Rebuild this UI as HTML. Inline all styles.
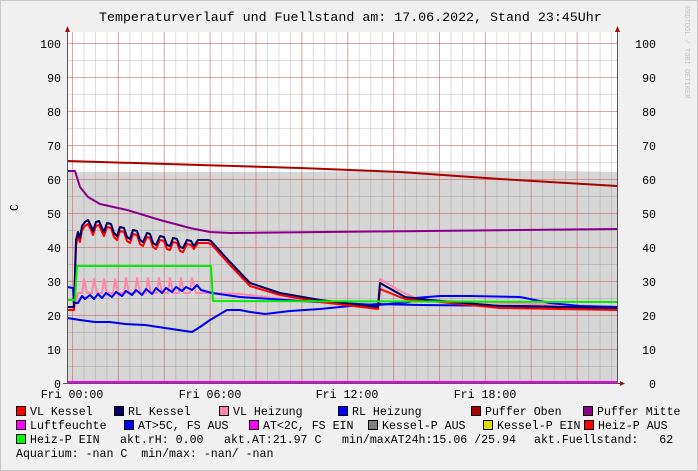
<!DOCTYPE html>
<html><head><meta charset="utf-8"><style>
html,body{margin:0;padding:0;background:#f0f0f0}
svg{display:block}
text{font-family:"Liberation Mono","DejaVu Sans Mono",monospace;fill:#000;white-space:pre}
</style></head><body>
<svg width="698" height="471" viewBox="0 0 698 471" xmlns="http://www.w3.org/2000/svg">
<defs>
<pattern id="minV" x="72" y="0" width="11.47" height="471" patternUnits="userSpaceOnUse"><line x1="0.5" y1="0" x2="0.5" y2="471" stroke="rgba(120,120,120,0.25)" stroke-width="1"/></pattern>
<pattern id="majV" x="72" y="0" width="45.87" height="471" patternUnits="userSpaceOnUse"><line x1="0.5" y1="0" x2="0.5" y2="471" stroke="rgba(230,80,80,0.4)" stroke-width="1"/></pattern>
<pattern id="minH" x="0" y="383" width="698" height="17" patternUnits="userSpaceOnUse"><line x1="0" y1="0.5" x2="698" y2="0.5" stroke="rgba(120,120,120,0.25)" stroke-width="1"/></pattern>
<pattern id="majH" x="0" y="383" width="698" height="34" patternUnits="userSpaceOnUse"><line x1="0" y1="0.5" x2="698" y2="0.5" stroke="rgba(230,80,80,0.4)" stroke-width="1"/></pattern>
</defs>
<rect x="0.5" y="0.5" width="697" height="470" fill="#f0f0f0" stroke="#c8c8c8"/>
<text x="99" y="21" font-size="13.3">Temperaturverlauf und Fuellstand am: 17.06.2022, Stand 23:45Uhr</text>
<text transform="translate(685,6) rotate(90)" font-size="7" style="fill:#c4c4c4">RRDTOOL / TOBI OETIKER</text>
<text transform="translate(18,211) rotate(-90)" font-size="11.6">C</text>
<rect x="67" y="32" width="550" height="351" fill="#ffffff"/>
<path d="M67,172 L300,172 L360,171 L560,171 L617,172 L617,383 L67,383 Z" fill="#d6d6d6"/>
<rect x="67" y="32" width="550" height="351" fill="url(#minV)"/>
<rect x="67" y="32" width="550" height="351" fill="url(#minH)"/>
<rect x="67" y="32" width="550" height="351" fill="url(#majV)"/>
<rect x="67" y="32" width="550" height="351" fill="url(#majH)"/>
<g fill="none" stroke-width="2" stroke-linejoin="round">
<polyline stroke="#aa0000" points="67,161 200,165 300,168 400,172 500,179 617,186"/>
<polyline stroke="#880088" points="67,171 75,171 80,187 88,197 100,204 127,210 160,220 190,228 210,232 230,233 617,229"/>
<polyline stroke="#0000ee" points="67,318 80,320 95,322 110,322 125,324 145,325 165,328 192,332 200,327 210,320 227,310 240,310 250,312 265,314 290,311 320,309 350,306 378,304 420,305 617,307"/>
<polyline stroke="#ff88aa" points="67,307 75,307 78,293 82,293 84,279 87,293 92,293 94,279 97,293 102,293 104,279 107,293 113,293 115,279 118,293 124,293 126,278 129,293 135,293 137,278 140,293 146,293 148,278 151,293 157,293 159,278 162,293 168,293 170,278 173,293 179,293 181,278 184,293 190,293 192,278 196,293 212,293 240,294 300,301 378,306 380,279 400,291 420,300 617,307"/>
<polyline stroke="#0000ff" points="67,287 73,288 74,303 78,303 82,296 85,299 90,295 94,299 98,294 102,298 106,293 112,297 116,292 122,296 126,291 132,295 136,290 142,295 146,289 152,294 156,288 162,293 166,288 172,292 176,287 182,291 186,287 192,290 197,285 201,290 212,293 240,297 300,301 340,303 378,305 410,302 415,298 440,296 470,296 520,297 550,303 580,306 617,307"/>
<polyline stroke="#ff0000" points="67,310 74,310 76,245 78,237 80,242 82,230 85,226 88,224 91,230 93,235 96,226 99,225 102,232 104,236 107,227 111,228 114,237 117,240 120,231 124,232 127,241 130,243 133,234 137,235 140,244 143,246 147,237 150,238 153,247 156,249 160,240 164,241 167,249 170,250 173,242 177,243 180,251 183,252 187,244 191,245 194,249 198,243 208,243 211,244 230,265 250,286 280,295 320,302 378,309 380,289 405,299 430,301 500,308 617,310"/>
<polyline stroke="#000066" points="67,307 74,307 76,240 78,232 80,238 82,226 85,222 88,220 91,226 93,231 96,222 99,221 102,228 104,232 107,223 111,224 114,233 117,236 120,227 124,228 127,237 130,239 133,230 137,231 140,240 143,242 147,233 150,234 153,243 156,245 160,236 164,237 167,245 170,246 173,238 177,239 180,247 183,248 187,240 191,241 194,246 198,240 208,240 211,241 230,262 250,283 280,293 320,300 378,307 380,283 405,297 430,300 500,306 617,308"/>
<polyline stroke="#00ee00" points="67,300 75,300 77,266 211,266 213,301 617,302"/>
<line x1="67" y1="382" x2="617" y2="382" stroke="#ee00ee" stroke-width="2"/>
</g>
<line x1="67.5" y1="32" x2="67.5" y2="384" stroke="#555"/>
<line x1="617.5" y1="32" x2="617.5" y2="384" stroke="#555"/>
<line x1="63" y1="383.5" x2="622" y2="383.5" stroke="#555"/>
<path d="M65,32 L70,32 L67.5,26 Z" fill="#991111"/>
<path d="M615,32 L620,32 L617.5,26 Z" fill="#991111"/>
<path d="M620,381 L620,386 L625,383.5 Z" fill="#991111"/>
<g font-size="11.6" text-anchor="end">
<text x="61" y="48">100</text><text x="61" y="82">90</text><text x="61" y="116">80</text><text x="61" y="150">70</text><text x="61" y="184">60</text><text x="61" y="218">50</text><text x="61" y="252">40</text><text x="61" y="286">30</text><text x="61" y="320">20</text><text x="61" y="354">10</text><text x="61" y="388">0</text>
</g>
<g font-size="11.6" text-anchor="end">
<text x="656" y="48">100</text><text x="656" y="82">90</text><text x="656" y="116">80</text><text x="656" y="150">70</text><text x="656" y="184">60</text><text x="656" y="218">50</text><text x="656" y="252">40</text><text x="656" y="286">30</text><text x="656" y="320">20</text><text x="656" y="354">10</text><text x="656" y="388">0</text>
</g>
<g font-size="11.6" text-anchor="middle">
<text x="72" y="398">Fri 00:00</text><text x="210" y="398">Fri 06:00</text><text x="347" y="398">Fri 12:00</text><text x="485" y="398">Fri 18:00</text>
</g>
<g stroke="#000" stroke-width="1">
<rect x="16.5" y="406.5" width="9" height="9" fill="#ff0000"/>
<rect x="114.5" y="406.5" width="9" height="9" fill="#000066"/>
<rect x="219.5" y="406.5" width="9" height="9" fill="#ff88aa"/>
<rect x="338.5" y="406.5" width="9" height="9" fill="#0000ff"/>
<rect x="471.5" y="406.5" width="9" height="9" fill="#aa0000"/>
<rect x="583.5" y="406.5" width="9" height="9" fill="#880088"/>
<rect x="16.5" y="420.5" width="9" height="9" fill="#ff00ff"/>
<rect x="124.5" y="420.5" width="9" height="9" fill="#0000ff"/>
<rect x="249.5" y="420.5" width="9" height="9" fill="#ff00ff"/>
<rect x="368.5" y="420.5" width="9" height="9" fill="#808080"/>
<rect x="483.5" y="420.5" width="9" height="9" fill="#dddd00"/>
<rect x="584.5" y="420.5" width="9" height="9" fill="#ff0000"/>
<rect x="16.5" y="434.5" width="9" height="9" fill="#00ff00"/>
</g>
<g font-size="11.6">
<text x="30" y="415">VL Kessel</text><text x="128" y="415">RL Kessel</text><text x="233" y="415">VL Heizung</text><text x="352" y="415">RL Heizung</text><text x="485" y="415">Puffer Oben</text><text x="597" y="415">Puffer Mitte</text>
<text x="30" y="429">Luftfeuchte</text><text x="138" y="429">AT&gt;5C, FS AUS</text><text x="263" y="429">AT&lt;2C, FS EIN</text><text x="382" y="429">Kessel-P AUS</text><text x="497" y="429">Kessel-P EIN</text><text x="598" y="429">Heiz-P AUS</text>
<text x="30" y="443">Heiz-P EIN</text><text x="120" y="443">akt.rH: 0.00</text><text x="224" y="443">akt.AT:21.97 C</text><text x="342" y="443">min/maxAT24h:15.06 /25.94</text><text x="534" y="443">akt.Fuellstand:   62</text>
<text x="16" y="457">Aquarium: -nan C  min/max: -nan/ -nan</text>
</g>
</svg>
</body></html>
